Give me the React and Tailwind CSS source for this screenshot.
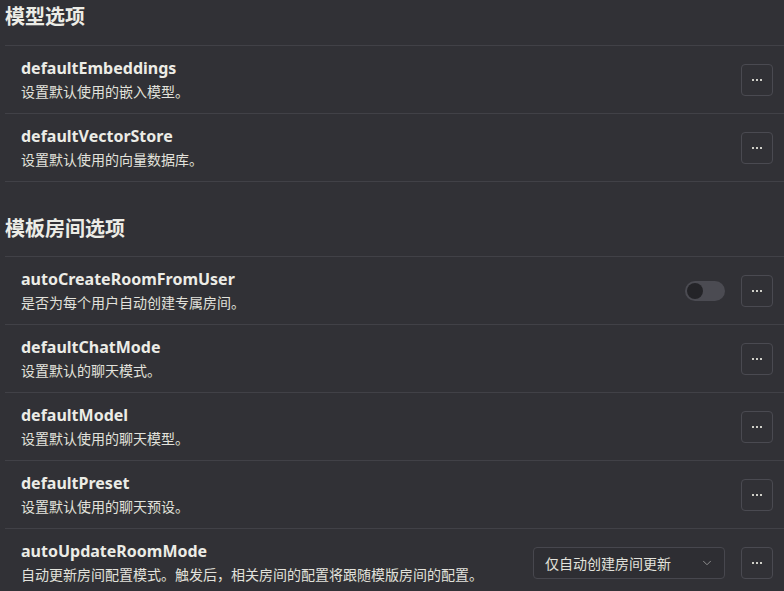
import { ChevronDown } from "lucide-react";

const font = { fontFamily: '"Noto Sans", "Noto Sans CJK SC", sans-serif' };

function MoreButton() {
  return (
    <button className="w-[32px] h-[32px] shrink-0 rounded-[4px] border border-[#4a4a51] flex items-center justify-center gap-[2px]">
      <span className="w-[2px] h-[2px] bg-[#cfcfc8]" />
      <span className="w-[2px] h-[2px] bg-[#cfcfc8]" />
      <span className="w-[2px] h-[2px] bg-[#cfcfc8]" />
    </button>
  );
}

function Row({ name, desc, control, last }) {
  return (
    <div
      className={
        "h-[68px] flex items-center pl-[16px] pr-[11px] " +
        (last ? "" : "border-b border-[#414147]")
      }
    >
      <div className="flex-1 min-w-0">
        <div className="text-[16px] leading-[22px] font-bold text-[#ecece6]">{name}</div>
        <div className="text-[14px] leading-[22px] text-[#e2e2dc] mt-[2px] whitespace-nowrap">{desc}</div>
      </div>
      {control}
      <MoreButton />
    </div>
  );
}

function Toggle() {
  return (
    <div className="w-[40px] h-[20px] rounded-full bg-[#4b4b52] mr-[16px] p-[2px] flex items-center">
      <div className="w-[16px] h-[16px] rounded-full bg-[#242428]" />
    </div>
  );
}

function Select() {
  return (
    <div className="w-[192px] h-[32px] shrink-0 rounded-[4px] border border-[#47474e] bg-[#2e2e33] mr-[16px] flex items-center justify-between pl-[11px] pr-[10px]">
      <span className="text-[14px] text-[#e2e2dc]">仅自动创建房间更新</span>
      <ChevronDown size={14} strokeWidth={1.5} className="text-[#9a9a9a]" />
    </div>
  );
}

export default function App() {
  return (
    <div className="w-[784px] h-[591px] overflow-hidden bg-[#313136] pl-[5px]" style={font}>
      <h2 className="text-[20px] font-bold text-[#ecece6] leading-[28px] pt-[3px] pb-[14px]">模型选项</h2>
      <div className="border-t border-[#414147]">
        <Row name="defaultEmbeddings" desc="设置默认使用的嵌入模型。" />
        <Row name="defaultVectorStore" desc="设置默认使用的向量数据库。" />
      </div>
      <h2 className="text-[20px] font-bold text-[#ecece6] leading-[28px] pt-[33px] pb-[13px]">模板房间选项</h2>
      <div className="border-t border-[#414147]">
        <Row name="autoCreateRoomFromUser" desc="是否为每个用户自动创建专属房间。" control={<Toggle />} />
        <Row name="defaultChatMode" desc="设置默认的聊天模式。" />
        <Row name="defaultModel" desc="设置默认使用的聊天模型。" />
        <Row name="defaultPreset" desc="设置默认使用的聊天预设。" />
        <Row
          name="autoUpdateRoomMode"
          desc="自动更新房间配置模式。触发后，相关房间的配置将跟随模版房间的配置。"
          control={<Select />}
          last
        />
      </div>
    </div>
  );
}
